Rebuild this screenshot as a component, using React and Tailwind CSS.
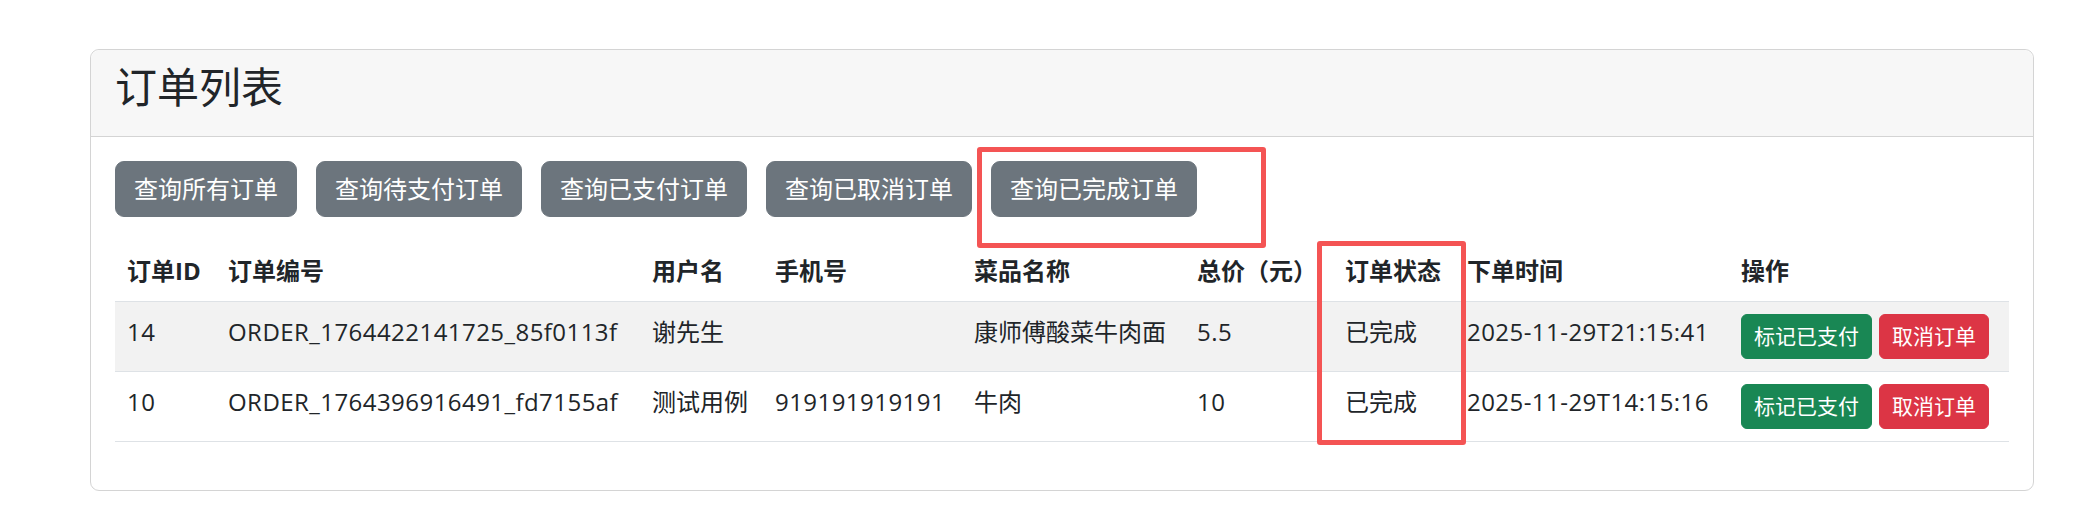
import React from "react";

const orders = [
  {
    id: 14,
    no: "ORDER_1764422141725_85f0113f",
    user: "谢先生",
    phone: "",
    dish: "康师傅酸菜牛肉面",
    price: "5.5",
    status: "已完成",
    time: "2025-11-29T21:15:41",
  },
  {
    id: 10,
    no: "ORDER_1764396916491_fd7155af",
    user: "测试用例",
    phone: "919191919191",
    dish: "牛肉",
    price: "10",
    status: "已完成",
    time: "2025-11-29T14:15:16",
  },
];

const filters = ["查询所有订单", "查询待支付订单", "查询已支付订单", "查询已取消订单", "查询已完成订单"];

const columns = [
  { label: "订单ID", w: "w-[101px]" },
  { label: "订单编号", w: "w-[424px]" },
  { label: "用户名", w: "w-[123px]" },
  { label: "手机号", w: "w-[199px]" },
  { label: "菜品名称", w: "w-[223px]" },
  { label: "总价（元）", w: "w-[148px]" },
  { label: "订单状态", w: "w-[122px]" },
  { label: "下单时间", w: "w-[274px]" },
  { label: "操作", w: "w-[280px]" },
];

const cell = "px-[12px] py-[12px] text-left align-top border-b border-[#dee2e6] whitespace-nowrap";
// latin text in the screenshot runs a touch wider than Open Sans
const num = `${cell} tracking-[0.45px]`;

export default function App() {
  return (
    <div className="relative w-full h-[507px] bg-white text-[#212529] font-['Open_Sans','Noto_Sans_CJK_SC',sans-serif] pt-[49px] pl-[90px] pr-[48px]">
      <div className="border border-[#d4d4d4] rounded-[9px] bg-white">
        <div className="bg-[#f7f7f7] border-b border-[#d4d4d4] rounded-t-[9px] px-[24px] py-[12px]">
          <h3 className="text-[42px] leading-[50px] font-normal mb-[12px]">订单列表</h3>
        </div>

        <div className="p-[24px]">
          <div className="flex gap-[19px] mb-[24px]">
            {filters.map((f) => (
              <button
                key={f}
                className="bg-[#6c757d] text-white text-[24px] leading-[36px] px-[18px] py-[9px] border border-[#6c757d] rounded-[9px]"
              >
                {f}
              </button>
            ))}
          </div>

          <table className="table-fixed w-[1894px] border-collapse text-[24px] leading-[36px] mb-[24px]">
            <thead>
              <tr>
                {columns.map((c) => (
                  <th key={c.label} className={`${cell} ${c.w} font-bold`}>
                    {c.label}
                  </th>
                ))}
              </tr>
            </thead>
            <tbody>
              {orders.map((o, i) => (
                <tr key={o.id} className={i % 2 === 0 ? "bg-[#f2f2f2]" : "bg-white"}>
                  <td className={num}>{o.id}</td>
                  <td className={num}>{o.no}</td>
                  <td className={cell}>{o.user}</td>
                  <td className={num}>{o.phone}</td>
                  <td className={cell}>{o.dish}</td>
                  <td className={num}>{o.price}</td>
                  <td className={cell}>{o.status}</td>
                  <td className={num}>{o.time}</td>
                  <td className={cell}>
                    <div className="flex gap-[7px]">
                      <button className="bg-[#198754] border border-[#198754] text-white text-[21px] leading-[31px] px-[12px] py-[6px] rounded-[6px]">
                        标记已支付
                      </button>
                      <button className="bg-[#dc3545] border border-[#dc3545] text-white text-[21px] leading-[31px] px-[12px] py-[6px] rounded-[6px]">
                        取消订单
                      </button>
                    </div>
                  </td>
                </tr>
              ))}
            </tbody>
          </table>
        </div>
      </div>

      {/* annotation boxes drawn over the screenshot */}
      <div className="absolute left-[977px] top-[147px] w-[289px] h-[101px] border-[5px] border-[#f45454] rounded-[3px] pointer-events-none" />
      <div className="absolute left-[1317px] top-[241px] w-[149px] h-[204px] border-[5px] border-[#f45454] rounded-[3px] pointer-events-none" />
    </div>
  );
}
